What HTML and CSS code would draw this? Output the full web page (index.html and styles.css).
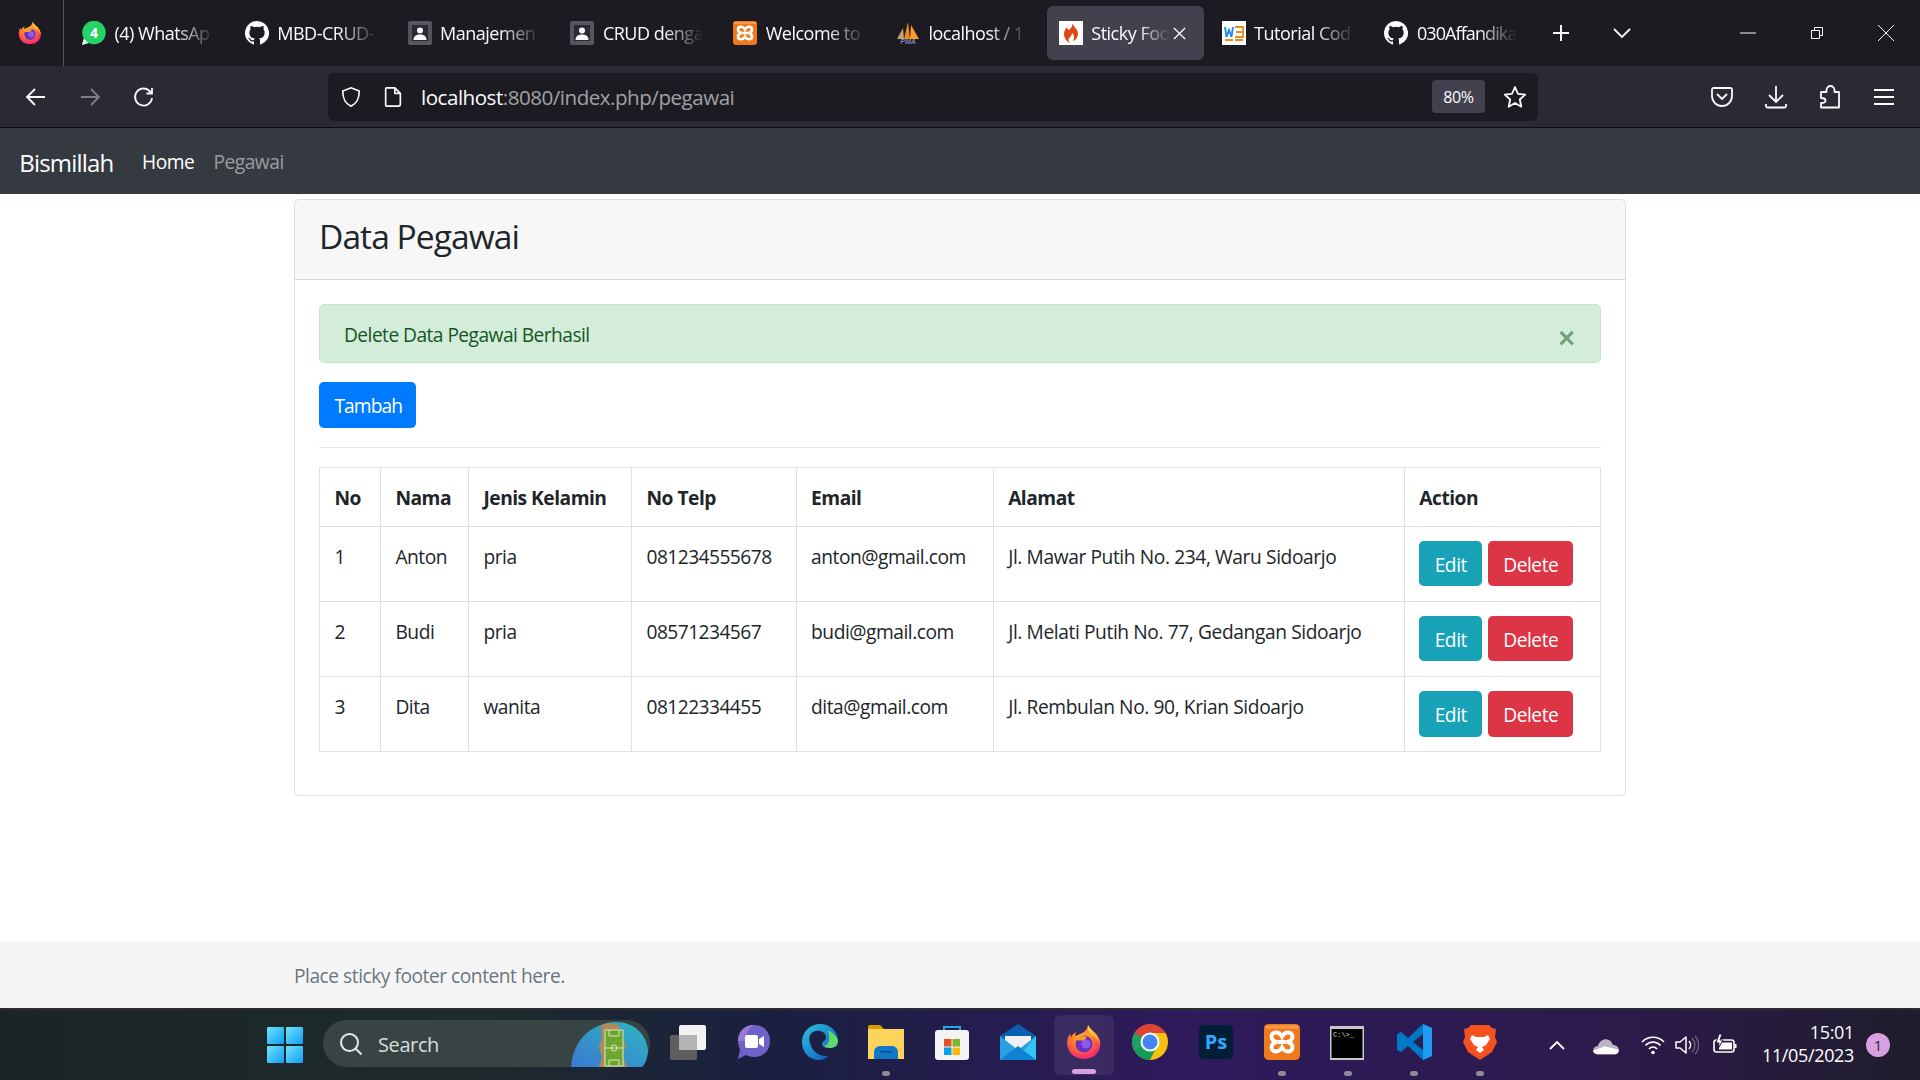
FILE: index.html
```html
<!DOCTYPE html>
<html lang="id">
<head>
<meta charset="utf-8">
<title>Sticky Footer</title>
<link rel="stylesheet" href="styles.css">
</head>
<body>
<svg class="defs" aria-hidden="true">
  <defs>
    <radialGradient id="fxg" cx="45%" cy="35%" r="75%"><stop offset="0" stop-color="#ffbd2e"/><stop offset=".45" stop-color="#ff7a2a"/><stop offset=".8" stop-color="#f5306a"/><stop offset="1" stop-color="#e0207a"/></radialGradient>
    <linearGradient id="fxy" x1="0" y1="0" x2="0" y2="1"><stop offset="0" stop-color="#ffe14a"/><stop offset="1" stop-color="#ff8a1e"/></linearGradient>
    <linearGradient id="winb" x1="0" y1="0" x2="1" y2="1"><stop offset="0" stop-color="#6fe3fb"/><stop offset="1" stop-color="#0f9ef5"/></linearGradient>
    <linearGradient id="edg" x1="0" y1="0" x2="1" y2="1"><stop offset="0" stop-color="#2fc5d8"/><stop offset=".6" stop-color="#1a7fcf"/><stop offset="1" stop-color="#114a9c"/></linearGradient>
    <linearGradient id="pill" x1="0" y1="1" x2="1" y2="0"><stop offset="0" stop-color="#3a78d0"/><stop offset="1" stop-color="#2fb6c4"/></linearGradient>
    <symbol id="i-firefox" viewBox="0 0 36 36">
      <path d="M22 1c1 3 4 5 7 8 5 5 6 10 5 14-1 7-8 12-16 12C9 35 2 29 1 20c0-4 1-8 3-10l1 3c1-2 3-4 5-5-1 2-1 3 0 4 3-2 8-3 10-6 1-2 2-3 2-5z" fill="url(#fxg)"/>
      <path d="M22 1c1 3 4 5 7 8 4 4 5 8 5 12-2-5-5-8-9-10-2-3-4-6-3-10z" fill="url(#fxy)"/>
      <circle cx="18" cy="20" r="8.5" fill="#6b2fc4"/>
      <path d="M9 16c3-4 8-5 12-3l-3 4c-3-1-6 0-9-1z" fill="#ff9a2a"/>
      <circle cx="20" cy="20" r="4.6" fill="#8f5ae8"/>
    </symbol>
    <symbol id="i-github" viewBox="0 0 16 16">
      <path fill="#fbfbfe" d="M8 0a8 8 0 0 0-2.53 15.59c.4.07.55-.17.55-.38v-1.49c-2.23.48-2.7-.94-2.7-.94-.36-.93-.89-1.17-.89-1.17-.73-.5.05-.49.05-.49.8.06 1.23.83 1.23.83.72 1.23 1.87.87 2.33.66.07-.52.28-.87.51-1.07-1.78-.2-3.64-.89-3.64-3.95 0-.87.31-1.59.82-2.15-.08-.2-.36-1.02.08-2.12 0 0 .67-.21 2.2.82a7.6 7.6 0 0 1 4 0c1.53-1.04 2.2-.82 2.2-.82.44 1.1.16 1.92.08 2.12.51.56.82 1.27.82 2.15 0 3.07-1.87 3.75-3.65 3.95.29.25.54.73.54 1.48v2.19c0 .21.15.46.55.38A8 8 0 0 0 8 0z"/>
    </symbol>
    <symbol id="i-person" viewBox="0 0 24 24">
      <rect width="24" height="24" rx="2" fill="#55555c"/>
      <rect x="4" y="4" width="16" height="16" fill="#2b2a33"/>
      <circle cx="12" cy="9.5" r="3" fill="#fbfbfe"/>
      <path d="M5.500 19c0-4 3-5.500 6.500-5.500s6.500 1.500 6.500 5.500z" fill="#fbfbfe"/>
    </symbol>
    <symbol id="i-xampp" viewBox="0 0 24 24">
      <rect width="24" height="24" rx="3" fill="#ee7a1d"/>
      <rect x="1" y="1" width="22" height="2" fill="#f79b4c"/>
      <path d="M12 8.500C10 4.500 5 5 5 8.500c0 2 1.500 3 3.500 3.500C6.500 12.500 5 13.500 5 15.500c0 3.500 5 4 7 0 2 4 7 3.500 7 0 0-2-1.500-3-3.500-3.500 2-.5 3.500-1.500 3.500-3.500 0-3.500-5-4-7 0zM9 12h6" fill="none" stroke="#fff" stroke-width="2.600"/>
    </symbol>
  </defs>
</svg>

<header class="tabstrip">
  <div class="fx-btn"><svg class="ico24"><use href="#i-firefox"/></svg></div>
  <div class="tabs">
    <div class="tab">
      <svg class="ico24" viewBox="0 0 24 24"><path d="M0 24l1.800-6.500A11.800 11.800 0 1 1 6.500 22z" fill="#25d366"/><path d="M0 24l1.800-6.500L6.500 22z" fill="#e6f5ea"/><text x="12" y="17" class="wa-num">4</text></svg>
      <span class="tab-label">(4) WhatsAp</span>
    </div>
    <div class="tab"><svg class="ico24"><use href="#i-github"/></svg><span class="tab-label">MBD-CRUD-</span></div>
    <div class="tab"><svg class="ico24"><use href="#i-person"/></svg><span class="tab-label">Manajemen</span></div>
    <div class="tab"><svg class="ico24"><use href="#i-person"/></svg><span class="tab-label">CRUD denga</span></div>
    <div class="tab"><svg class="ico24"><use href="#i-xampp"/></svg><span class="tab-label">Welcome to</span></div>
    <div class="tab">
      <svg class="ico24" viewBox="0 0 24 24"><path d="M1 18L7 7l1 11z" fill="#c9a070"/><path d="M8 18L12 1l2 17z" fill="#f08a1d"/><path d="M14 18l1-14 8 14z" fill="#f6a02c"/><text x="12" y="23" class="pma">PMA</text></svg>
      <span class="tab-label">localhost / 1</span>
    </div>
    <div class="tab tab-active">
      <svg class="ico24" viewBox="0 0 24 24"><rect width="24" height="24" fill="#fff"/><path d="M13 2c1 3-1 5-3 7-2-1-2-2-2-3-2 2-3 5-3 7 0 4 3 8 6 9-2-2-2-4 0-6 1-1 2-2 2-4 2 2 3 4 1 8 3-1 5-4 5-7 0-5-4-7-6-11z" fill="#dd4814"/></svg>
      <span class="tab-label tab-label-active">Sticky Foo</span>
      <svg class="tab-close" viewBox="0 0 14 14"><path d="M1 1l12 12M13 1L1 13"/></svg>
    </div>
    <div class="tab">
      <svg class="ico24" viewBox="0 0 24 24"><rect width="24" height="24" fill="#fff"/><path d="M3 6l1.500 10 2.500-7 2.500 7L11 6" fill="none" stroke="#1e88e5" stroke-width="1.800"/><path d="M13 6h8v10h-8M14 11h6" fill="none" stroke="#f08a1d" stroke-width="1.800"/><rect x="3" y="18" width="8" height="2" fill="#f08a1d"/><rect x="13" y="18" width="8" height="2" fill="#f08a1d"/></svg>
      <span class="tab-label">Tutorial Cod</span>
    </div>
    <div class="tab"><svg class="ico24"><use href="#i-github"/></svg><span class="tab-label tab-label-tight">030Affandika</span></div>
  </div>
  <div class="strip-btn strip-new"><svg viewBox="0 0 20 20" class="line ico20"><path d="M10 2v16M2 10h16" stroke-width="2"/></svg></div>
  <div class="strip-btn strip-list"><svg viewBox="0 0 20 20" class="line ico20"><path d="M2 6l8 8 8-8"/></svg></div>
  <div class="win-btns">
    <div class="win-btn"><svg viewBox="0 0 16 16" class="thin ico16"><path d="M0 8h16"/></svg></div>
    <div class="win-btn"><svg viewBox="0 0 16 16" class="thin ico16"><path d="M2.500 5.500h8v8h-8zM5.500 5.500v-3h8v8h-3"/></svg></div>
    <div class="win-btn"><svg viewBox="0 0 16 16" class="thin ico16"><path d="M0 0l16 16M16 0L0 16"/></svg></div>
  </div>
</header>

<nav class="toolbar">
  <div class="tool"><svg viewBox="0 0 24 24" class="line ico24"><path d="M21 12H3M11 4l-8 8 8 8"/></svg></div>
  <div class="tool tool-dim"><svg viewBox="0 0 24 24" class="line ico24"><path d="M3 12h18M13 4l8 8-8 8"/></svg></div>
  <div class="tool"><svg viewBox="0 0 24 24" class="line ico24"><path d="M20 13a8.500 8.500 0 1 1-3-7.500L20 8.500M20 3v5.500h-5.500"/></svg></div>
  <div class="urlbar">
    <svg viewBox="0 0 24 24" class="line ico22"><path d="M12 2l9 3.500c0 9-2.500 13.500-9 16.500C5.500 19 3 14.500 3 5.500z"/></svg>
    <svg viewBox="0 0 24 24" class="line ico22 url-page"><path d="M5 2h9l6 6v12a2 2 0 0 1-2 2H5a1 1 0 0 1-1-1V3a1 1 0 0 1 1-1zM14 2v6h6" stroke-linejoin="round"/></svg>
    <span class="url"><span class="url-host">localhost</span>:8080/index.php/pegawai</span>
    <span class="zoom-badge">80%</span>
    <svg viewBox="0 0 24 24" class="line ico24 url-star"><path d="M12 2l3 6.800 7.200.8-5.400 4.900 1.500 7.200L12 18l-6.300 3.700 1.500-7.200L1.800 9.600 9 8.800z" stroke-linejoin="round"/></svg>
  </div>
  <div class="tool-right">
    <div class="tool"><svg viewBox="0 0 24 24" class="line ico24"><path d="M3 3h18a1.500 1.500 0 0 1 1 1.500V11a10 10 0 0 1-20 0V4.500A1.500 1.500 0 0 1 3 3zM7 9l5 5 5-5"/></svg></div>
    <div class="tool"><svg viewBox="0 0 24 24" class="line ico24"><path d="M12 1v15M5 10l7 7 7-7M2 19v2a1.500 1.500 0 0 0 1.500 1.500h17A1.500 1.500 0 0 0 22 21v-2"/></svg></div>
    <div class="tool"><svg viewBox="0 0 24 24" class="line ico24"><path d="M3 7h5.500C8 4 9.500 1 12.500 1S17 4 16.500 7H21v15.500H3V18c3 0 4.500-1 4.500-2.500S6 13 3 13z" stroke-linejoin="round"/></svg></div>
    <div class="tool"><svg viewBox="0 0 24 24" class="line ico24"><path d="M2 5h20M2 12h20M2 19h20"/></svg></div>
  </div>
</nav>

<nav class="navbar">
  <a class="brand">Bismillah</a>
  <a class="nav-link nav-on">Home</a>
  <a class="nav-link">Pegawai</a>
</nav>

<main class="page">
  <section class="card">
    <div class="card-header"><h3 class="title">Data Pegawai</h3></div>
    <div class="card-body">
      <div class="alert">Delete Data Pegawai Berhasil<span class="alert-close">×</span></div>
      <a class="btn btn-primary">Tambah</a>
      <hr class="rule">
      <table class="table">
        <colgroup>
          <col class="c1"><col class="c2"><col class="c3"><col class="c4"><col class="c5"><col class="c6"><col class="c7">
        </colgroup>
        <thead>
          <tr><th>No</th><th>Nama</th><th>Jenis Kelamin</th><th>No Telp</th><th>Email</th><th>Alamat</th><th>Action</th></tr>
        </thead>
        <tbody>
          <tr><td>1</td><td>Anton</td><td>pria</td><td>081234555678</td><td>anton@gmail.com</td><td>Jl. Mawar Putih No. 234, Waru Sidoarjo</td><td><div class="actions"><a class="btn btn-info">Edit</a><a class="btn btn-danger">Delete</a></div></td></tr>
          <tr><td>2</td><td>Budi</td><td>pria</td><td>08571234567</td><td>budi@gmail.com</td><td>Jl. Melati Putih No. 77, Gedangan Sidoarjo</td><td><div class="actions"><a class="btn btn-info">Edit</a><a class="btn btn-danger">Delete</a></div></td></tr>
          <tr><td>3</td><td>Dita</td><td>wanita</td><td>08122334455</td><td>dita@gmail.com</td><td>Jl. Rembulan No. 90, Krian Sidoarjo</td><td><div class="actions"><a class="btn btn-info">Edit</a><a class="btn btn-danger">Delete</a></div></td></tr>
        </tbody>
      </table>
    </div>
  </section>
</main>

<footer class="footer"><span class="footer-text">Place sticky footer content here.</span></footer>

<div class="taskbar">
  <svg class="win-logo" viewBox="0 0 36 36"><rect width="17" height="17" rx="1" fill="url(#winb)"/><rect x="19" width="17" height="17" rx="1" fill="url(#winb)"/><rect y="19" width="17" height="17" rx="1" fill="url(#winb)"/><rect x="19" y="19" width="17" height="17" rx="1" fill="url(#winb)"/></svg>
  <div class="search">
    <svg viewBox="0 0 24 24" class="search-ico"><circle cx="10.500" cy="10.500" r="8.500"/><path d="M16.500 16.500l6 6"/></svg>
    <span class="search-text">Search</span>
    <svg class="search-art" viewBox="0 0 77 47"><path d="M0 47C2 20 20 3 45 2c18 0 30 12 32 28 0 8-3 14-6 17z" fill="url(#pill)"/><path d="M30 6c3-3 14-4 18 0l3 12 4 6-3 12 4 11H28l3-10-3-10 3-9z" fill="#b08a58"/><rect x="34" y="10" width="18" height="36" fill="#6da62c" stroke="#d8e8c0"/><path d="M34 28h18M38 10v6h10v-6M38 46v-6h10v6" fill="none" stroke="#d8e8c0"/><circle cx="43" cy="28" r="3" fill="none" stroke="#d8e8c0"/></svg>
  </div>
  <div class="apps">
    <div class="app"><svg class="ico36" viewBox="0 0 36 36"><rect x="0" y="11" width="27" height="25" rx="2" fill="#5f5f5f"/><rect x="9" y="1" width="27" height="25" rx="2" fill="#f2f2f2"/><rect x="9" y="11" width="18" height="15" fill="#b4b4b4"/></svg></div>
    <div class="app"><svg class="ico36" viewBox="0 0 36 36"><path d="M18 1c10 0 16 7 16 16s-6 16-16 16c-3 0-6-1-8-2l-8 4 2-9c-1-3-2-6-2-9C2 8 8 1 18 1z" fill="#6e62c8"/><path d="M2 17C2 8 8 1 18 1c-6 4-9 9-9 16z" fill="#9a78d0"/><rect x="9" y="11" width="13" height="13" rx="2" fill="#fff"/><path d="M23 15l5-3v11l-5-3z" fill="#fff"/></svg></div>
    <div class="app"><svg class="ico36" viewBox="0 0 36 36"><path d="M18 0c10 0 18 7 18 17 0 5-4 7-8 7-5 0-8-1-8-4 0-3 4-3 4-7 0-4-5-7-10-6C8 8 6 13 8 19c2 8 9 14 18 13-3 3-6 4-9 4C7 36 0 28 0 18 0 8 8 0 18 0z" fill="url(#edg)"/><path d="M26 6c5 3 10 7 10 11 0 5-4 7-8 7-2 0-5-1-6-2 4-1 7-5 4-16z" fill="#62d868"/></svg></div>
    <div class="app"><svg class="ico36" viewBox="0 0 36 36"><path d="M0 3a2 2 0 0 1 2-2h10l4 4H0z" fill="#d99e00"/><rect y="5" width="36" height="30" fill="#fcd45c"/><path d="M6 35v-7a6 6 0 0 1 6-6h12a6 6 0 0 1 6 6v7z" fill="#0f78c8"/><rect x="12" y="27" width="12" height="1.500" fill="#0a4a88"/></svg></div>
    <div class="app"><svg class="ico36" viewBox="0 0 36 36"><path d="M10 8V3h16v5" fill="none" stroke="#27a4e8" stroke-width="2"/><rect x="1" y="6" width="34" height="30" rx="3" fill="#f4f4f4"/><rect x="10" y="15" width="7.500" height="7.500" fill="#e8502a"/><rect x="18.500" y="15" width="7.500" height="7.500" fill="#7db82a"/><rect x="10" y="23.500" width="7.500" height="7.500" fill="#08a0e8"/><rect x="18.500" y="23.500" width="7.500" height="7.500" fill="#fcb80c"/></svg></div>
    <div class="app"><svg class="ico36" viewBox="0 0 36 36"><path d="M0 12L18 0l18 12v22H0z" fill="#0a5fb0"/><path d="M5 12h26v8L18 26 5 20z" fill="#f0f0f2"/><path d="M0 12l18 14 18-14v24H0z" fill="#2aa0e4"/><path d="M36 12v24H16z" fill="#36c4f4"/><path d="M0 36l18-14 18 14z" fill="#0f82d4"/></svg></div>
    <div class="app app-active"><svg class="ico36"><use href="#i-firefox"/></svg></div>
    <div class="app"><svg class="ico36" viewBox="0 0 36 36"><circle cx="18" cy="18" r="18" fill="#db4437"/><path d="M18 18L2.500 27A18 18 0 0 0 18 36l9-18z" fill="#0f9d58"/><path d="M18 9h15.500A18 18 0 0 1 18 36l9-18z" fill="#f4c20d"/><path d="M18 18L2.500 27A18 18 0 0 1 2.500 9z" fill="#1aa260"/><circle cx="18" cy="18" r="8.500" fill="#4285f4" stroke="#fff" stroke-width="2"/></svg></div>
    <div class="app"><svg class="ico36" viewBox="0 0 36 36"><rect x="1" y="1" width="34" height="34" rx="5" fill="#001e36"/><text x="18" y="25" class="ps">Ps</text></svg></div>
    <div class="app"><svg class="ico36"><use href="#i-xampp"/></svg></div>
    <div class="app"><svg class="ico36" viewBox="0 0 36 36"><rect y="2" width="34" height="34" fill="#c8c8c8"/><rect x="1.500" y="5" width="31" height="29" fill="#000"/><text x="3" y="13" class="cmd">C:\&gt;_</text></svg></div>
    <div class="app"><svg class="ico36" viewBox="0 0 36 36"><path d="M27 0l9 4v28l-9 4-15-14-7 6-4-2V10l4-2 7 6z" fill="#0078c8"/><path d="M27 0l9 4v28l-9 4z" fill="#1f9cf0"/><path d="M27 10v16l-10-8z" fill="#2b2050"/></svg></div>
    <div class="app"><svg class="ico36" viewBox="0 0 36 36"><path d="M9 1h18l3 3 4 1-1 8 2 5-5 10-12 8-12-8L1 18l2-5-1-8 4-1z" fill="#f4511e"/><path d="M10 11l4 2h8l4-2 2 4-4 6-4 2 2 3-4 3-4-3 2-3-4-2-4-6z" fill="#fff"/></svg></div>
  </div>
  <div class="tray">
    <svg class="tray-chevron" viewBox="0 0 16 10"><path d="M1 9l7-7 7 7" fill="none" stroke="#fff" stroke-width="1.800"/></svg>
    <svg class="tray-ico tray-cloud" viewBox="0 0 24 24"><path d="M1 17c0-3 2-4 4-4 1-4 4-6 7-6s5 2 6 5c3 0 5 2 5 4s-1 4-4 4H5c-2 0-4-1-4-3z" fill="#bcb6c4"/><path d="M1 17l10-4 12 3c0 2-1 4-4 4H5c-2 0-4-1-4-3z" fill="#fff"/></svg>
    <svg class="tray-ico" viewBox="0 0 24 24"><g fill="none" stroke="#fff" stroke-width="1.600"><path d="M1 9a15 15 0 0 1 22 0M4.500 12.500a10 10 0 0 1 15 0M8 16a5 5 0 0 1 8 0"/></g><circle cx="12" cy="19.500" r="1.800" fill="#fff"/></svg>
    <svg class="tray-ico" viewBox="0 0 24 24"><g fill="none" stroke="#fff" stroke-width="1.500"><path d="M1 9v6h4l6 5V4L5 9z" stroke-linejoin="round"/><path d="M14 8a6 6 0 0 1 0 8"/><path d="M17 5a10 10 0 0 1 0 14M20 3a13 13 0 0 1 0 18" stroke="#6a5f78"/></g></svg>
    <svg class="tray-ico" viewBox="0 0 24 24"><rect x="1" y="7" width="20" height="12" rx="2.500" fill="none" stroke="#fff" stroke-width="1.600"/><rect x="6" y="9.500" width="13" height="7" fill="#fff"/><rect x="21.500" y="11" width="2" height="4" fill="#fff"/><path d="M6 1L3 10h3l-1 6 5-9H7l2-6z" fill="#fff" stroke="#2b1b48"/></svg>
    <div class="clock"><span>15:01</span><span>11/05/2023</span></div>
    <span class="notif">1</span>
  </div>
</div>
</body>
</html>
```

FILE: styles.css
```css
* { box-sizing: border-box; }
html { font-size: 19.2px; }
body {
  margin: 0;
  width: 1920px;
  height: 1080px;
  overflow: hidden;
  display: flex;
  flex-direction: column;
  background: #fff;
  color: #212529;
  font-family: "Open Sans", "Noto Sans", sans-serif;
  font-size: 19.2px;
  line-height: 1.5;
  letter-spacing: -0.5px;
}
.defs { position: absolute; width: 0; height: 0; }
.ico16 { width: 16px; height: 16px; }
.ico20 { width: 20px; height: 20px; }
.ico22 { width: 22px; height: 22px; flex: none; }
.ico24 { width: 24px; height: 24px; flex: none; }
.ico36 { width: 36px; height: 36px; }
.line { fill: none; stroke: #fbfbfe; stroke-width: 1.800; }
.thin { fill: none; stroke: #fbfbfe; stroke-width: 1; }

/* tab strip */
.tabstrip { height: 66px; background: #1c1b22; display: flex; align-items: stretch; color: #fbfbfe; flex: none; }
.fx-btn { width: 64px; border-right: 1px solid #55555c; display: flex; align-items: center; justify-content: center; padding-right: 3px; }
.tabs { display: flex; gap: 5.800px; padding-left: 6px; align-items: center; }
.tab { width: 157px; height: 54px; display: flex; align-items: center; padding: 0 12px; gap: 8.500px; border-radius: 6px; }
.tab-active { background: #42414d; }
.tab-label {
  flex: 1;
  min-width: 0;
  overflow: hidden;
  white-space: nowrap;
  font-size: 18px;
  letter-spacing: -0.5px;
  -webkit-mask-image: linear-gradient(to right, #000 60%, transparent 100%);
  mask-image: linear-gradient(to right, #000 60%, transparent 100%);
}
.tab-label-tight { letter-spacing: -0.9px; }
.tab-close { width: 13px; height: 13px; fill: none; stroke: #fbfbfe; stroke-width: 1.400; margin: 0 6px 0 -6px; flex: none; }
.wa-num { font-family: "Open Sans", sans-serif; font-size: 14px; font-weight: 700; fill: #fff; text-anchor: middle; letter-spacing: 0; }
.pma { font-family: "Liberation Sans", sans-serif; font-size: 7px; font-style: italic; font-weight: 700; fill: #7a86c0; text-anchor: middle; letter-spacing: 0; }
.strip-btn { display: flex; align-items: center; justify-content: center; width: 40px; }
.strip-new { margin-left: 12px; }
.strip-list { margin-left: 21px; }
.win-btns { margin-left: auto; display: flex; }
.win-btn { width: 69px; display: flex; align-items: center; justify-content: center; }

/* toolbar */
.toolbar { height: 62px; flex: none; background: #2b2a33; border-bottom: 1px solid #0c0c0d; display: flex; align-items: center; padding: 0 9px; color: #fbfbfe; }
.tool { width: 54px; display: flex; justify-content: center; }
.tool-dim { opacity: .4; }
.tool-right { margin-left: auto; display: flex; }
.urlbar { margin-left: 157px; width: 1210px; height: 48px; background: #1c1b22; border-radius: 6px; display: flex; align-items: center; padding: 0 11px 0 12px; }
.url-page { margin-left: 20px; }
.url { margin-left: 17px; padding-top: 2px; font-size: 20.600px; letter-spacing: -0.5px; color: rgba(251,251,254,.6); flex: 1; }
.url-host { color: #fbfbfe; }
.zoom-badge { width: 53px; height: 33px; background: #42414d; border-radius: 4px; display: flex; align-items: center; justify-content: center; font-size: 16px; letter-spacing: -0.4px; color: #fbfbfe; }
.url-star { margin-left: 18px; }

/* navbar */
.navbar { height: 66px; flex: none; background: #343a40; display: flex; align-items: center; padding: 3px 19.200px 0; }
.brand { font-size: 24px; color: #fff; margin-right: 19px; letter-spacing: -0.8px; }
.nav-link { color: rgba(255,255,255,.5); padding: 0 9.600px; }
.nav-on { color: #fff; }

/* page */
.page { flex: 1; width: 1368px; margin: 0 auto; padding: 5px 18px 0; min-height: 0; }
.card { border: 1px solid rgba(0,0,0,.125); border-radius: 4.800px; }
.card-header { background: rgba(0,0,0,.03); border-bottom: 1px solid rgba(0,0,0,.125); padding: 16.400px 24px 12.400px; }
.title { margin: 0 0 9.600px; font-size: 33.600px; font-weight: 400; line-height: 1.2; letter-spacing: -0.95px; }
.card-body { padding: 24px; }
.alert { position: relative; background: #d4edda; border: 1px solid #c3e6cb; color: #155724; border-radius: 4.800px; padding: 16.400px 24px 12.400px; margin-bottom: 19.200px; letter-spacing: -0.55px; }
.alert-close { position: absolute; right: 25px; top: 12px; font-size: 28.800px; font-weight: 700; line-height: 1.5; opacity: .5; color: #155724; letter-spacing: 0; font-family: "Liberation Sans", sans-serif; }
.btn { display: inline-block; border: 1px solid transparent; border-radius: 4.800px; padding: 8.700px 14.400px 5.700px; color: #fff; line-height: 1.5; text-align: center; }
.btn-primary { background: #007bff; width: 97px; letter-spacing: -0.9px; }
.btn-info { background: #17a2b8; width: 63px; padding-left: 0; padding-right: 0; }
.btn-danger { background: #dc3545; width: 85px; padding-left: 0; padding-right: 0; }
.rule { border: 0; border-top: 1px solid rgba(0,0,0,.1); margin: 19.200px 0; }
.table { width: 100%; table-layout: fixed; border-collapse: collapse; margin-bottom: 19px; }
.table th, .table td { border: 1px solid #dee2e6; padding: 16.400px 14.400px 12.400px; text-align: left; vertical-align: top; }
.table td { height: 75.200px; letter-spacing: -0.47px; }
.table td:nth-child(4) { letter-spacing: -0.55px; }
.table td:nth-child(6) { letter-spacing: -0.4px; }
.table td:last-child { padding-top: 14.400px; padding-bottom: 14.400px; }
.table th { font-weight: 700; }
.c1 { width: 61px; } .c2 { width: 88px; } .c3 { width: 163px; } .c4 { width: 164.500px; }
.c5 { width: 197px; } .c6 { width: 411px; } .c7 { width: 196px; }
.actions { display: flex; gap: 6px; }

/* footer */
.footer { height: 67px; flex: none; background: #f5f5f5; display: flex; align-items: center; padding: 3px 0 0 294px; }
.footer-text { color: #6c757d; letter-spacing: -0.48px; }

/* taskbar */
.taskbar {
  height: 72px;
  flex: none;
  display: flex;
  align-items: center;
  padding-left: 267px;
  border-top: 2px solid #2c2c30;
  background: linear-gradient(90deg, #1c2526 0%, #1e2a2c 25%, #1a2040 40%, #2f1a5c 62%, #2c1a4a 85%, #1f1d2c 100%);
}
.win-logo { width: 36px; height: 36px; }
.search { margin: -3px 0 0 20px; width: 327px; height: 47px; border-radius: 24px; background: #384443; display: flex; align-items: center; padding-left: 16px; position: relative; }
.search-ico { width: 24px; height: 24px; fill: none; stroke: #e8e8e8; stroke-width: 2; }
.search-text { margin-left: 15px; padding-top: 2px; font-size: 20px; color: #d8dcdc; letter-spacing: -0.4px; }
.search-art { position: absolute; right: 2px; top: 0; width: 77px; height: 47px; }
.apps { display: flex; margin-left: 5px; }
.app { width: 66px; height: 60px; display: flex; align-items: center; justify-content: center; position: relative; padding-bottom: 6px; }
.app:nth-child(4)::after, .app:nth-child(10)::after, .app:nth-child(11)::after, .app:nth-child(12)::after, .app:nth-child(13)::after {
  content: ""; position: absolute; left: 29px; bottom: -1px; width: 8px; height: 5px; border-radius: 3px; background: #8e8a98;
}
.app-active { background: rgba(255,255,255,.07); border-radius: 6px; width: 60px; margin: 0 3px; }
.app-active::after { content: ""; position: absolute; left: 18px; bottom: 1px; width: 24px; height: 5px; border-radius: 3px; background: #d8a0e0; }
.ps { font-family: "Open Sans", sans-serif; font-size: 20px; font-weight: 700; fill: #31a8ff; text-anchor: middle; letter-spacing: 0; }
.cmd { font-family: "Liberation Mono", monospace; font-size: 7px; fill: #d0d0d0; letter-spacing: 0; }
.tray { margin-left: auto; padding-right: 18px; display: grid; grid-template-columns: 48px 50px 44px 24px 51px 104px 48px; align-items: center; justify-items: center; }
.tray-ico { width: 24px; height: 24px; }
.tray-chevron { width: 16px; height: 10px; }
.tray-cloud { width: 28px; height: 28px; }
.clock { justify-self: end; display: flex; flex-direction: column; align-items: flex-end; padding-bottom: 3px; color: #fff; font-size: 18px; line-height: 23px; letter-spacing: -0.35px; }
.notif { width: 24px; height: 24px; border-radius: 50%; background: #d8a0e0; color: #1c1b22; font-size: 14px; display: flex; align-items: center; justify-content: center; letter-spacing: 0; }
```
